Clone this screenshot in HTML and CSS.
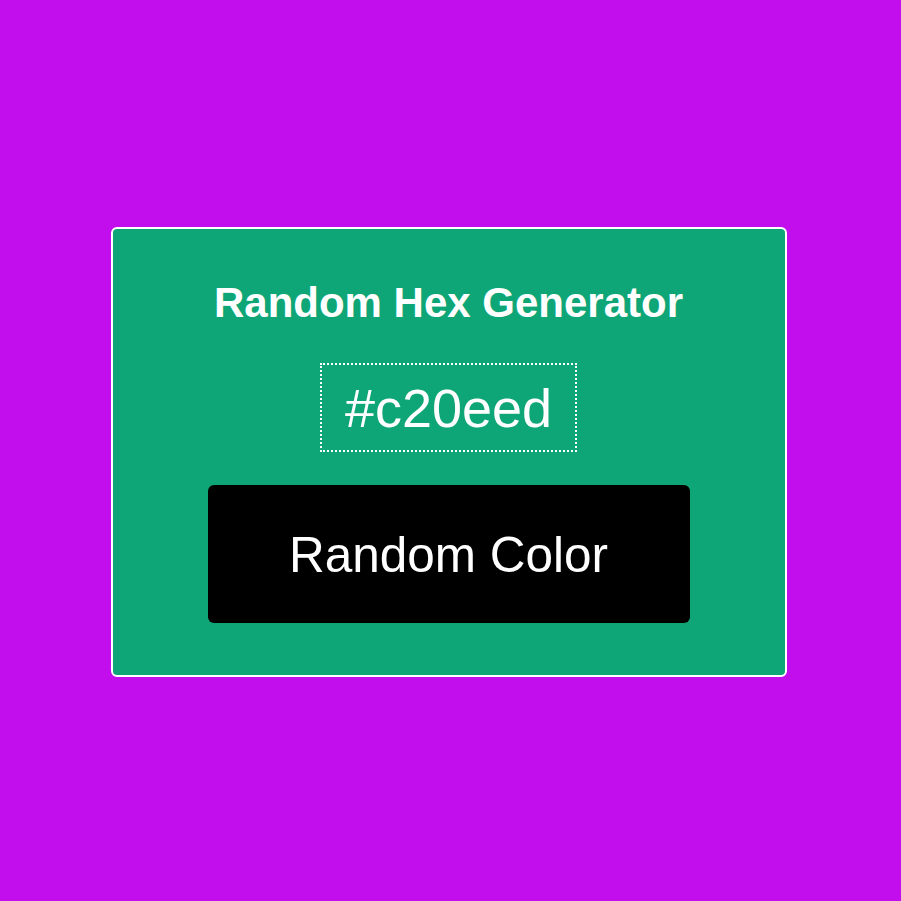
FILE: index.html
```html
<!DOCTYPE html>
<html lang="en">
<head>
<meta charset="utf-8">
<title>Random Hex Generator</title>
<link rel="stylesheet" href="styles.css">
</head>
<body>
  <main class="card">
    <h1 class="title">Random Hex Generator</h1>
    <div class="hex">#c20eed</div>
    <button class="btn" type="button">Random Color</button>
  </main>
</body>
</html>
```
FILE: styles.css
```css
html, body {
  margin: 0;
  height: 100%;
}
body {
  box-sizing: border-box;
  background: #c20eed;
  font-family: "Liberation Sans", Arial, sans-serif;
  display: flex;
  align-items: center;
  justify-content: center;
  padding: 3px 4px 0 0;
}
.card {
  box-sizing: border-box;
  width: 676px;
  height: 450px;
  border: 2px solid #ffffff;
  border-radius: 6px;
  background: #0fa677;
  display: flex;
  flex-direction: column;
  align-items: center;
  padding-top: 51px;
}
.title {
  margin: 0;
  color: #ffffff;
  font-size: 42px;
  font-weight: bold;
  line-height: 45px;
}
.hex {
  margin-top: 38px;
  border: 2px dotted #ffffff;
  color: #ffffff;
  font-size: 54px;
  line-height: 62px;
  padding: 12px 23px 11px;
}
.btn {
  margin-top: 33px;
  width: 482px;
  height: 138px;
  border: none;
  border-radius: 6px;
  background: #000000;
  color: #ffffff;
  font-family: "Liberation Sans", Arial, sans-serif;
  font-size: 49.5px;
  cursor: pointer;
}
```
